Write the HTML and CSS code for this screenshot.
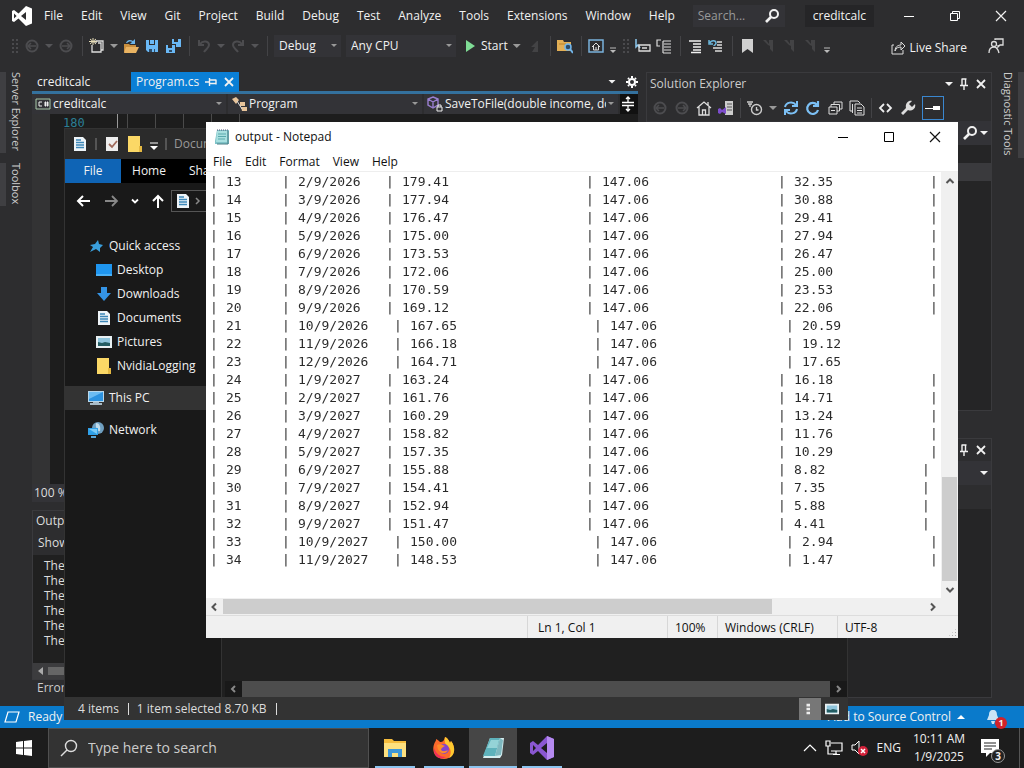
FILE: index.html
```html
<!DOCTYPE html>
<html lang="en">
<head>
  <meta charset="UTF-8">
  <meta name="viewport" content="width=device-width, initial-scale=1.0">
  <title>Desktop</title>
  <link rel="stylesheet" href="styles.css">
</head>
<body>
  <!-- shared icons -->
  <svg class="sprite" aria-hidden="true">
    <symbol id="i-close" viewBox="0 0 12 12"><path d="M1 1l10 10M11 1L1 11" stroke="currentColor" stroke-width="1.2"/></symbol>
    <symbol id="i-x" viewBox="0 0 12 12"><path d="M2 2l8 8M10 2l-8 8" stroke="currentColor" stroke-width="1.8"/></symbol>
    <symbol id="i-pin" viewBox="0 0 12 12"><path d="M3.5 1h5M4 1v6M7.500 1v6M2 7.500h8M6 8v4" stroke="currentColor" stroke-width="1.400" fill="none"/></symbol>
    <symbol id="i-loupe" viewBox="0 0 16 16"><circle cx="10" cy="6" r="4" stroke="currentColor" stroke-width="2" fill="none"/><path d="M7 9l-5 5" stroke="currentColor" stroke-width="2.6"/></symbol>
    <symbol id="i-doc" viewBox="0 0 16 16"><path d="M2 1h9l3 3v11H2z" fill="#eef4f8"/><path d="M4 4h5M4 6.500h8M4 9h8M4 11.500h8" stroke="#3d87b8" stroke-width="1.300"/></symbol>
    <symbol id="i-pic" viewBox="0 0 16 16"><path d="M0 2h16v12H0z" fill="#e8f0f2"/><path d="M2 4h12v8H2z" fill="#8fc5dc"/><path d="M2 8l4 1 3-1 5 1v3H2z" fill="#235d63"/></symbol>
    <symbol id="i-folder" viewBox="0 0 16 16"><path d="M1 0h12v10h2v6H1z" fill="#fbd866"/><path d="M12 10h3v6h-3z" fill="#e5b942"/></symbol>
    <symbol id="i-note" viewBox="0 0 16 16"><path d="M3 1h12v14H1L1 12z" fill="#7fc3c8"/><path d="M3 2h10v11H2z" fill="#a9e0e0"/><path d="M4 5h8M4 7.500h8M4 10h7" stroke="#5aa9ad"/><path d="M3 1h11" stroke="#557" stroke-dasharray="1 1"/><path d="M14 2v13H3" stroke="#4a7d85" fill="none"/></symbol>
    <symbol id="i-back" viewBox="0 0 16 16"><circle cx="8" cy="8" r="5.500" stroke="currentColor" stroke-width="2" fill="none"/><path d="M4 8h8M7 5L4 8l3 3" stroke="currentColor" stroke-width="1.500" fill="none"/></symbol>
    <symbol id="i-lines" viewBox="0 0 16 16"><path d="M2 3h12M6 6h8M6 9h8M6 12h8M4 14.500h10" stroke="currentColor" stroke-width="1.300"/></symbol>
    <symbol id="i-mark" viewBox="0 0 16 16"><path d="M3 2h3l3 4V2h4v12l-3-3V8L8 7z" fill="currentColor"/></symbol>
    <symbol id="i-over" viewBox="0 0 8 16"><path d="M1 10h6" stroke="currentColor"/><path d="M1 12h6l-3 3z" fill="currentColor"/></symbol>
  </svg>

  <div class="desktop">
    <main class="vs">
      <header class="vs-menu">
        <svg class="vs-logo" viewBox="0 0 20 20"><path d="M14 0l6 2.500v15L14 20 6.500 12.600 2 16l-2-1V5l2-1 4.500 3.400zM14 6l-5 4 5 4zM2 7.500v5L4.600 10z" fill="#fff" fill-rule="evenodd"/></svg>
        <nav>
          <button>File</button><button>Edit</button><button>View</button><button>Git</button><button>Project</button><button>Build</button><button>Debug</button><button>Test</button><button>Analyze</button><button>Tools</button><button>Extensions</button><button>Window</button><button>Help</button>
        </nav>
        <div class="vs-search"><input type="text" placeholder="Search..." aria-label="Search"><svg class="ic"><use href="#i-loupe"/></svg></div>
        <span class="vs-name">creditcalc</span>
        <div class="vs-controls">
          <button aria-label="Minimize"><svg viewBox="0 0 12 12"><path d="M1 6.500h10" stroke="#fff"/></svg></button>
          <button aria-label="Restore"><svg viewBox="0 0 12 12"><path d="M1.500 3.500h7v7h-7zM3.500 3.500v-2h7v7h-2" stroke="#fff" fill="none"/></svg></button>
          <button aria-label="Close"><svg><use href="#i-close"/></svg></button>
        </div>
      </header>

      <div class="vs-toolbar">
        <span class="grip"></span>
        <button class="ic dim" aria-label="Back"><svg><use href="#i-back"/></svg></button>
        <span class="caret dim"></span>
        <button class="ic dim flip" aria-label="Forward"><svg><use href="#i-back"/></svg></button>
        <span class="sep"></span>
        <button class="ic" aria-label="New project"><svg viewBox="0 0 16 16"><path d="M3 7v7h9V5H9M7 5V3h7v9h-2" stroke="#ddd" stroke-width="1.300" fill="none"/><path d="M4 0v7M1 1l6 5M7 1L1 6M0 3.500h8" stroke="#e6dcb8"/></svg></button>
        <span class="caret"></span>
        <button class="ic" aria-label="Open"><svg viewBox="0 0 16 16"><path d="M1 6h5l1 1h6v7H1z" fill="#c98f3f"/><path d="M3 9h13l-3 6H1z" fill="#e9b362"/><path d="M3 5c1-3 4-4 7-2l2-2v5H7l2-2C7 3 5 4 4 5z" fill="#6cb4ea"/></svg></button>
        <button class="ic" aria-label="Save"><svg viewBox="0 0 16 16"><path d="M2 2h3v5h6V2h3v12H4l-2-2z" fill="#6ab8f5"/><path d="M6 2h4v4H6z" fill="#6ab8f5"/><path d="M5 11h6v3H5z" fill="#2d4b66"/><path d="M8 11h2v3H8z" fill="#6ab8f5"/></svg></button>
        <button class="ic" aria-label="Save all"><svg viewBox="0 0 16 16"><path d="M7 1h2v3h4V1h3v8h-5V6H7z" fill="#6ab8f5"/><path d="M1 7h2v3h4V7h3v8H1z" fill="#6ab8f5"/><path d="M4 12h3v2H4z" fill="#2d4b66"/></svg></button>
        <span class="sep"></span>
        <button class="ic dim" aria-label="Undo"><svg viewBox="0 0 16 16"><path d="M3 2v5h5M4 6c3-4 9-3 9 1 0 3-3 4-5 7" stroke="currentColor" stroke-width="2" fill="none"/></svg></button>
        <span class="caret dim"></span>
        <button class="ic dim flip" aria-label="Redo"><svg viewBox="0 0 16 16"><path d="M3 2v5h5M4 6c3-4 9-3 9 1 0 3-3 4-5 7" stroke="currentColor" stroke-width="2" fill="none"/></svg></button>
        <span class="caret dim"></span>
        <span class="sep"></span>
        <select class="config" aria-label="Solution configuration"><option>Debug</option></select>
        <select class="config platform" aria-label="Solution platform"><option>Any CPU</option></select>
        <button class="start"><svg class="ic" viewBox="0 0 16 16"><path d="M5 2l9 6-9 6z" fill="#7fdc95"/></svg>Start</button>
        <span class="caret"></span>
        <button class="ic faint" aria-label="Hot reload"><svg viewBox="0 0 16 16"><path d="M11 3l-6 6h4l-3 5h6V3z" fill="currentColor"/></svg></button>
        <span class="sep"></span>
        <button class="ic" aria-label="Find in files"><svg viewBox="0 0 16 16"><path d="M0 2h6l1 2h7v9H0z" fill="#e2af55"/><path d="M2 6h7" stroke="#b9822d"/><circle cx="11" cy="9" r="3" fill="#2d4b66" stroke="#72b6ea" stroke-width="1.500"/><path d="M13 11l3 4" stroke="#72b6ea" stroke-width="2"/></svg></button>
        <span class="sep"></span>
        <button class="ic" aria-label="Start window"><svg viewBox="0 0 16 16"><path d="M1 2h14v12H1z" stroke="#7ab2dd" stroke-width="1.500" fill="none"/><path d="M4 9l4-4 4 4M5.500 8v4h5V8M8 12V9" stroke="#ddd" fill="none"/></svg></button>
        <svg class="over"><use href="#i-over"/></svg>
        <span class="grip"></span>
        <button class="ic" aria-label="Select element"><svg viewBox="0 0 16 16"><path d="M1 1v8l2-2 2 3" stroke="#8cc8ee" stroke-width="1.500" fill="none"/><path d="M4 7h11v6H4zM7 10h5" stroke="#ddd" fill="none" stroke-width="1.300"/></svg></button>
        <button class="ic" aria-label="Display layout"><svg viewBox="0 0 16 16"><path d="M5 2H1v6h3M7 3h8M8 6h7M8 9h7M8 12h7M7 3v12M7 15h8" stroke="#ddd" fill="none" stroke-width="1.200"/></svg></button>
        <span class="sep"></span>
        <button class="ic" aria-label="Indent"><svg><use href="#i-lines"/></svg></button>
        <button class="ic" aria-label="Uncomment"><svg viewBox="0 0 16 16"><path d="M1 2v4h4M2 5c1-3 6-3 6 0 0 2-2 2-2 3" stroke="#6bb5da" stroke-width="1.500" fill="none"/><path d="M9 4h5M9 7h5M5 10h9M7 13h7" stroke="#ddd" stroke-width="1.300"/></svg></button>
        <span class="sep"></span>
        <button class="ic" aria-label="Bookmark"><svg viewBox="0 0 16 16"><path d="M3 1h11v14l-5.500-4L3 15z" fill="#d0d0d0"/></svg></button>
        <button class="ic faint" aria-label="Previous bookmark"><svg><use href="#i-mark"/></svg></button>
        <button class="ic faint" aria-label="Next bookmark"><svg><use href="#i-mark"/></svg></button>
        <button class="ic faint" aria-label="Clear bookmarks"><svg><use href="#i-mark"/></svg></button>
        <svg class="over"><use href="#i-over"/></svg>
        <button class="share"><svg class="ic" viewBox="0 0 16 16"><path d="M4 5H2v9h11v-4M5 11c0-5 4-6 6-6V2l4 4-4 4V7C8 7 6 8 5 11z" stroke="#ddd" fill="none"/></svg>Live Share</button>
        <button class="ic feedback" aria-label="Feedback"><svg viewBox="0 0 16 16"><circle cx="6" cy="6" r="2.500" stroke="#ddd" fill="none" stroke-width="1.300"/><path d="M1 15c0-4 2-6 5-6s4 2 5 6M7 2V1h8v6h-3l-2 2V7" stroke="#ddd" fill="none" stroke-width="1.300"/></svg></button>
      </div>

      <div class="vs-body">
        <aside class="rail"><button>Server Explorer</button><button>Toolbox</button></aside>

        <section class="docs">
          <div class="doc-tabs">
            <button class="doc-tab">creditcalc</button>
            <button class="doc-tab active">Program.cs <svg class="pin-side"><use href="#i-pin"/></svg><svg><use href="#i-x"/></svg></button>
            <span class="caret light"></span>
            <button class="gear" aria-label="Settings"><svg viewBox="0 0 12 12"><circle cx="6" cy="6" r="3" stroke="#fff" stroke-width="2" fill="none"/><path d="M6 0v2M6 10v2M0 6h2M10 6h2M2 2l1 1M9 9l1 1M10 2L9 3M3 9l-1 1" stroke="#fff" stroke-width="2"/></svg></button>
          </div>
          <div class="doc-nav">
            <div><svg viewBox="0 0 16 16"><path d="M1 3h14v10H1z" stroke="#a9c9a9" fill="none"/><path d="M7 6H4v4h3M9 7h5M9 9h5M10.500 5.500v5M12.500 5.500v5" stroke="#eee" fill="none"/></svg><select aria-label="Project"><option>creditcalc</option></select></div>
            <div><svg viewBox="0 0 16 16"><path d="M1 3l4-2 3 3-3 4zM9 6h5v4H9zM10 11h6v4h-5z" fill="#e8c49a"/><path d="M6 5l5 8" stroke="#ddd"/></svg><select aria-label="Type"><option>Program</option></select></div>
            <div><svg viewBox="0 0 16 16"><path d="M6 1l5 2v6l-5 3-5-3V3zM1 3l5 3 5-3M6 6v5" stroke="#9a7fd0" fill="none" stroke-width="1.400"/><path d="M10 11h5v4h-5zM11 11V9h3v2" stroke="#eee" fill="none"/></svg><select aria-label="Member"><option>SaveToFile(double income, do</option></select></div>
            <button class="split" aria-label="Split"><svg viewBox="0 0 16 16"><path d="M2 6.500h12M2 9.500h12M8 1v5M8 10v5M6 3l2-2 2 2M6 13l2 2 2-2" stroke="#fff" stroke-width="1.300" fill="none"/></svg></button>
          </div>
          <div class="code"><span class="line-no">180</span><span class="guides"></span></div>
          <div class="zoom-level">100 %</div>
          <div class="output">
            <h2>Output</h2>
            <p>Show output from:</p>
            <pre>The thread
The thread
The thread
The thread
The thread
The program</pre>
            <div class="output-scroll"><i></i><b></b></div>
          </div>
          <button class="error-tab">Error List</button>
        </section>

        <section class="side">
          <div class="panel solution">
            <div class="panel-head"><h2>Solution Explorer</h2><span class="caret light"></span><svg><use href="#i-pin"/></svg><svg><use href="#i-x"/></svg></div>
            <div class="sol-tools">
              <button class="ic dim" aria-label="Back"><svg><use href="#i-back"/></svg></button>
              <button class="ic dim flip" aria-label="Forward"><svg><use href="#i-back"/></svg></button>
              <button class="ic" aria-label="Home"><svg viewBox="0 0 16 16"><path d="M1 8l7-6 7 6M3 7v8h10V7M6.500 15v-5h3v5M12 5V2" stroke="#ddd" stroke-width="1.300" fill="none"/></svg></button>
              <button class="ic" aria-label="Switch views"><svg viewBox="0 0 16 16"><path d="M7 1h8v14H7z" fill="#ccc"/><path d="M9 4h5M9 7h5M9 10h5" stroke="#555"/><path d="M0 9l2-1 2 2 4-3v7l-4-2-2 2-2-1z" fill="#7c4dcc"/></svg></button>
              <span class="sep"></span>
              <button class="ic" aria-label="Pending changes"><svg viewBox="0 0 16 16"><circle cx="9.500" cy="9.500" r="5" stroke="#ccc" stroke-width="1.400" fill="none"/><path d="M9.500 7v3h2M0 2h6M1 4h4M3 4v3" stroke="#ccc" stroke-width="1.300" fill="none"/></svg></button>
              <span class="caret"></span>
              <button class="ic" aria-label="Sync"><svg viewBox="0 0 16 16"><path d="M2 7c1-5 8-6 11-2M14 1v5H9M14 9c-1 5-8 6-11 2M2 15v-5h5" stroke="#7cc0f5" stroke-width="2" fill="none"/></svg></button>
              <button class="ic" aria-label="Refresh"><svg viewBox="0 0 16 16"><path d="M12 5a5.500 5.500 0 1 0 1 5M13 1v5H8" stroke="#7cc0f5" stroke-width="2.200" fill="none"/></svg></button>
              <button class="ic" aria-label="Collapse all"><svg viewBox="0 0 16 16"><path d="M2 7h8v7H2zM4 10.500h4M4 7V4.500h8.500V11H10M7 4V2h8v7h-2" stroke="#ddd" fill="none"/></svg></button>
              <button class="ic" aria-label="Show all files"><svg viewBox="0 0 16 16"><path d="M4 11H1V1h8l2 2M6 4h6l3 3v8H6zM8 8h5M8 10.500h5M8 13h5M3.500 13V4" stroke="#ddd" fill="none"/></svg></button>
              <span class="sep"></span>
              <button class="ic" aria-label="View code"><svg viewBox="0 0 16 16"><path d="M6 4L2 8l4 4M9 4l4 4-4 4" stroke="#eee" stroke-width="1.800" fill="none"/></svg></button>
              <button class="ic" aria-label="Properties"><svg viewBox="0 0 16 16"><path d="M15 4a5 5 0 0 1-7 6l-5 5-2-2 5-5c-1-4 2-8 6-7L9 4l3 3z" fill="#ddd"/></svg></button>
              <button class="ic on" aria-label="Preview"><svg viewBox="0 0 16 16"><path d="M0 8.500h8" stroke="#fff"/><path d="M8 6h7v4H8z" fill="#fff"/></svg></button>
            </div>
            <div class="sol-search"><svg class="ic"><use href="#i-loupe"/></svg><span class="caret light"></span></div>
            <div class="sol-tree"><div class="sol-selected"></div></div>
          </div>
          <div class="panel props">
            <div class="panel-head"><h2></h2><svg><use href="#i-pin"/></svg><svg><use href="#i-x"/></svg></div>
            <div class="props-row"><span class="caret light"></span></div>
            <div class="props-box"></div>
          </div>
        </section>

        <aside class="rail right"><button>Diagnostic Tools</button></aside>
      </div>

      <footer class="vs-status">
        <svg viewBox="0 0 16 16"><path d="M4 3h11l-3 10H1z" stroke="#fff" fill="none" stroke-width="1.200"/></svg>
        <span>Ready</span>
        <button class="source">Add to Source Control<i></i></button>
        <span class="bell"><svg viewBox="0 0 16 16"><path d="M8 1c3 0 4 2 4 5l2 5H2l2-5c0-3 1-5 4-5zM6 12h4l-1 3H7z" fill="#c9e3f6"/></svg><b>1</b></span>
      </footer>
    </main>

    <section class="window explorer">
      <header class="ex-title">
        <svg class="ic"><use href="#i-doc"/></svg><span class="bar"></span>
        <svg class="ic" viewBox="0 0 16 16"><path d="M2 1h12v14H2z" fill="#eee"/><path d="M5 8l3 3 5-6" stroke="#a06a5b" stroke-width="1.800" fill="none"/></svg>
        <svg class="ic"><use href="#i-folder"/></svg>
        <svg class="ic narrow" viewBox="0 0 8 16"><path d="M0 7h8" stroke="#fff"/><path d="M0 10h8l-4 4z" fill="#fff"/></svg><span class="bar"></span>
        <span>Documents</span>
      </header>
      <nav class="ex-tabs"><button class="file">File</button><button>Home</button><button>Share</button></nav>
      <div class="ex-nav">
        <button class="ic" aria-label="Back"><svg viewBox="0 0 16 16"><path d="M15 8H3M8 3L3 8l5 5" stroke="#fff" stroke-width="2" fill="none"/></svg></button>
        <button class="ic" aria-label="Forward"><svg viewBox="0 0 16 16"><path d="M1 8h12M8 3l5 5-5 5" stroke="#888" stroke-width="1.800" fill="none"/></svg></button>
        <button class="ic narrow" aria-label="Recent"><svg viewBox="0 0 8 16"><path d="M1 6.500l3 3 3-3" stroke="#fff" stroke-width="1.800" fill="none"/></svg></button>
        <button class="ic" aria-label="Up"><svg viewBox="0 0 16 16"><path d="M8 15V3M3 8l5-5 5 5" stroke="#fff" stroke-width="2" fill="none"/></svg></button>
        <div class="address"><svg class="ic"><use href="#i-doc"/></svg><svg class="ic narrow" viewBox="0 0 8 16"><path d="M2 5l3 3-3 3" stroke="#888" stroke-width="1.500" fill="none"/></svg></div>
      </div>
      <div class="ex-body">
        <ul class="ex-tree">
          <li><svg viewBox="0 0 16 16"><path d="M10 2l1 4 4 1-3 3 0 4-4-3-6 3 3-5-3-2 5-1z" fill="#3a9fdc"/></svg>Quick access</li>
          <li class="sub"><svg viewBox="0 0 16 16"><path d="M0 2h16v12H0z" fill="#1f96f0"/><path d="M0 12h16v2H0z" fill="#4ab1f7"/></svg>Desktop</li>
          <li class="sub"><svg viewBox="0 0 16 16"><path d="M5 1h6v6h4l-7 8-7-8h4z" fill="#3494e6"/></svg>Downloads</li>
          <li class="sub"><svg><use href="#i-doc"/></svg>Documents</li>
          <li class="sub"><svg><use href="#i-pic"/></svg>Pictures</li>
          <li class="sub"><svg><use href="#i-folder"/></svg>NvidiaLogging</li>
          <li class="group selected"><svg viewBox="0 0 16 16"><path d="M0 1h16v11H0z" fill="#b9d7ea"/><path d="M1 2h14v9H1z" fill="#2d93e0"/><path d="M1 2h14L1 9z" fill="#6cbcf2"/><path d="M5 12h6v1h3v2H2v-2h3z" fill="#a9bcc8"/></svg>This PC</li>
          <li class="group"><svg viewBox="0 0 16 16"><circle cx="10" cy="6" r="6" fill="#6f9fc0"/><path d="M8 1c3 0 5 3 4 8-2 1-5-3-4-8z" fill="#c1dceb"/><path d="M0 6h10v7H0z" fill="#2fa0e8"/><path d="M1 7h8v5z" fill="#7acbf7"/><path d="M3 14h5v2H3z" fill="#58a7d8"/></svg>Network</li>
        </ul>
        <div class="ex-files">
          <div class="ex-scroll"><svg viewBox="0 0 8 16"><path d="M6 5L3 8l3 3" stroke="#888" stroke-width="2" fill="none"/></svg><span></span><svg viewBox="0 0 8 16"><path d="M2 5l3 3-3 3" stroke="#888" stroke-width="2" fill="none"/></svg></div>
        </div>
      </div>
      <footer class="ex-status">
        <span>4 items</span><span>1 item selected 8.70 KB</span>
        <button class="on" aria-label="Details view"><svg viewBox="0 0 16 16"><path d="M4 2h4v3H4zM4 6.500h4v3H4zM4 11h4v3H4z" fill="#eee"/></svg></button>
        <button aria-label="Large icons"><svg><use href="#i-pic"/></svg></button>
      </footer>
    </section>

    <section class="window notepad">
      <header class="np-title">
        <svg class="ic"><use href="#i-note"/></svg><h1>output - Notepad</h1>
        <button aria-label="Minimize"><svg viewBox="0 0 12 12"><path d="M1 6.500h10" stroke="#000"/></svg></button>
        <button aria-label="Maximize"><svg viewBox="0 0 12 12"><path d="M1.500 1.500h9v9h-9z" stroke="#000" fill="none"/></svg></button>
        <button aria-label="Close"><svg><use href="#i-close"/></svg></button>
      </header>
      <nav class="np-menu"><button>File</button><button>Edit</button><button>Format</button><button>View</button><button>Help</button></nav>
      <div class="np-edit">
        <textarea id="note" aria-label="Text editor" wrap="off" spellcheck="false"></textarea>
        <div class="np-vscroll"><svg viewBox="0 0 10 10"><path d="M1.500 7L5 3.500 8.500 7" stroke="#555" stroke-width="2" fill="none"/></svg><span></span><svg viewBox="0 0 10 10"><path d="M1.500 3L5 6.500 8.500 3" stroke="#555" stroke-width="2" fill="none"/></svg></div>
      </div>
      <div class="np-hscroll"><svg viewBox="0 0 10 10"><path d="M7 1.500L3.500 5 7 8.500" stroke="#555" stroke-width="2" fill="none"/></svg><span></span><svg viewBox="0 0 10 10"><path d="M3 1.500L6.500 5 3 8.500" stroke="#555" stroke-width="2" fill="none"/></svg></div>
      <footer class="np-status"><span></span><span>Ln 1, Col 1</span><span>100%</span><span>Windows (CRLF)</span><span>UTF-8<i></i></span></footer>
    </section>
  </div>

  <div class="taskbar">
    <button class="start-menu" aria-label="Start"><svg viewBox="0 0 16 16"><path d="M0 2l7-1v6.500H0zM8 1l8-1v7.500H8zM0 8.500h7V15l-7-1zM8 8.500h8V16l-8-1z" fill="#fff"/></svg></button>
    <div class="task-search"><svg viewBox="0 0 18 18"><circle cx="11" cy="7" r="5.500" stroke="#ddd" stroke-width="1.400" fill="none"/><path d="M7 11l-6 6" stroke="#ddd" stroke-width="1.400"/></svg><input type="text" placeholder="Type here to search" aria-label="Type here to search"></div>
    <div class="apps">
      <button aria-label="File Explorer"><svg viewBox="0 0 24 24"><path d="M1 3h8l2 2h12v16H1z" fill="#f5bc3d"/><path d="M1 7h22v14H1z" fill="#fde07f"/><path d="M5 13h14v8h-4v-4H9v4H5z" fill="#3e97d8"/></svg></button>
      <button aria-label="Firefox"><svg viewBox="0 0 24 24"><path d="M3 6c1-1 1-2 1-3 2 1 3 2 4 3 3 0 4-1 5-5 3 1 4 4 5 6l1-2c5 6 5 17-7 18C2 23-1 14 3 6z" fill="#fb6a2b"/><path d="M13 1c3 1 4 4 5 6l1-2c5 6 4 15-2 17 3-5 2-10-2-12-2-2-3-5-2-9z" fill="#fdc92f"/><circle cx="12" cy="13" r="5" fill="#8444cc"/><path d="M5 9c3-2 6 0 8 1-2 1-4 2-4 4 2 2 5 1 7 0-2 5-10 5-11-5z" fill="#fc8c2a"/><path d="M2 12c2 6 6 9 12 9-6 4-13-1-12-9z" fill="#f02e5c"/></svg></button>
      <button class="current" aria-label="Notepad"><svg viewBox="0 0 24 24"><path d="M9 2h14l-2 17-2 3H2z" fill="#d6eef0"/><path d="M9 2h10l-5 18H2z" fill="#5eb2bb"/><path d="M10 4h8l-2 8H6z" fill="#94d3d7"/><path d="M19 2l-5 18 6-1 2-15z" fill="#7fb8bf"/></svg></button>
      <button aria-label="Visual Studio"><svg viewBox="0 0 24 24"><path d="M17 0l7 3v18l-7 3L8 15l-5 4-3-2V7l3-2 5 4zM17 7l-6 5 6 5zM3 9v6l3-3z" fill="#8a57d1" fill-rule="evenodd"/><path d="M17 0l7 3v18l-7 3z" fill="#b58af0"/></svg></button>
    </div>
    <div class="tray">
      <svg class="up" viewBox="0 0 14 14"><path d="M1 10l6-6 6 6" stroke="#fff" stroke-width="1.200" fill="none"/></svg>
      <svg viewBox="0 0 18 16"><path d="M6 3h11v8H6M1 1h4v5H1zM3 6v8h9M11 11v3M8 14.500h7" stroke="#fff" fill="none" stroke-width="1.200"/></svg>
      <svg viewBox="0 0 18 16"><path d="M1 5h3l4-4v13l-4-4H1z" stroke="#fff" fill="none"/><circle cx="12" cy="11" r="5" fill="#d3223a"/><path d="M10 9l4 4M14 9l-4 4" stroke="#fff" stroke-width="1.500"/></svg>
      <span>ENG</span>
      <time>10:11 AM<br>1/9/2025</time>
      <button class="notes" aria-label="Notifications"><svg viewBox="0 0 18 18"><path d="M0 0h18v14H9l-4 4v-4H0z" fill="#fff"/><path d="M3 4h12M3 7h12M3 10h8" stroke="#222"/></svg><b>3</b></button>
      <span class="show-desktop"></span>
    </div>
  </div>

  <script>
    // loan schedule, cells padded with tabs so the columns stay on the tab grid
    const interest = ['32.35', '30.88', '29.41', '27.94', '26.47', '25.00', '23.53', '22.06', '20.59', '19.12', '17.65',
      '16.18', '14.71', '13.24', '11.76', '10.29', '8.82', '7.35', '5.88', '4.41', '2.94', '1.47'];
    const payment = ['179.41', '177.94', '176.47', '175.00', '173.53', '172.06', '170.59', '169.12', '167.65', '166.18', '164.71',
      '163.24', '161.76', '160.29', '158.82', '157.35', '155.88', '154.41', '152.94', '151.47', '150.00', '148.53'];
    const tabs = (n) => '\t'.repeat(n);

    document.getElementById('note').value = interest.map((rate, i) => {
      const month = (i + 1) % 12 + 1;
      const year = i < 11 ? 2026 : 2027;
      return [
        '|\t' + (i + 13) + tabs(5),
        '\t' + month + '/9/' + year + tabs(3),
        '\t' + payment[i] + tabs(17),
        '\t147.06' + tabs(16),
        '\t' + rate + tabs(12),
        ''
      ].join('|');
    }).join('\n');
  </script>
</body>
</html>
```
FILE: styles.css
```css
* {
  margin: 0;
  padding: 0;
  box-sizing: border-box;
}

body {
  font-family: "Open Sans", "Noto Sans", sans-serif;
  font-size: 12px;
  line-height: 16px;
  color: #f1f1f1;
  background: #1f1f1f;
  height: 100vh;
  display: flex;
  flex-direction: column;
  overflow: hidden;
}

button,
input,
select,
textarea {
  font: inherit;
  color: inherit;
  background: none;
  border: none;
  outline: none;
  white-space: nowrap;
}

h1,
h2 {
  font-size: 12px;
  font-weight: normal;
}

svg {
  display: block;
  flex: none;
}

.sprite {
  position: absolute;
  width: 0;
  height: 0;
}

.desktop {
  flex: 1;
  min-height: 0;
  position: relative;
}

/* small shared pieces */
.ic,
.ic svg {
  width: 16px;
  height: 16px;
  flex: none;
}

.ic.narrow,
.ic.narrow svg {
  width: 8px;
}

.dim { color: #4c4c4f; }
.faint { color: #434345; }
.flip svg { transform: scaleX(-1); }

.caret {
  flex: none;
  width: 8px;
  height: 4px;
  background: #999;
  clip-path: polygon(0 0, 100% 0, 50% 100%);
}

.caret.dim { background: #555558; }
.caret.light { background: #f1f1f1; }

.sep {
  width: 1px;
  height: 20px;
  margin: 0 1px 0 3px;
  background: #434346;
}

.grip {
  width: 8px;
  height: 16px;
  background: radial-gradient(#4a4a4d 1px, transparent 1px) 0 0 / 4px 4px;
}

.over {
  width: 8px;
  height: 16px;
  color: #bbb;
}

select {
  appearance: none;
  background: url("data:image/svg+xml,%3Csvg xmlns='http://www.w3.org/2000/svg' width='8' height='4'%3E%3Cpath d='M1 0h6L4 3z' fill='%23999'/%3E%3C/svg%3E") no-repeat right 3px center;
}

/* Visual Studio */
.vs {
  height: 100%;
  display: flex;
  flex-direction: column;
  background: #2d2d2f;
}

.vs-menu {
  height: 32px;
  flex: none;
  display: flex;
  align-items: center;
  padding-left: 12px;
}

.vs-logo {
  width: 20px;
  height: 20px;
}

.vs-menu nav {
  display: flex;
  gap: 18px;
  margin-left: 12px;
}

.vs-search {
  display: flex;
  align-items: center;
  width: 92px;
  height: 22px;
  margin-left: auto;
  padding: 0 5px;
  background: #333337;
}

.vs-search input {
  flex: 1;
  min-width: 0;
}

.vs-search input::placeholder { color: #999; }

.vs-name {
  margin: 0 12px 0 20px;
  padding: 3px 8px;
  background: #252527;
}

.vs-controls { display: flex; }

.vs-controls button {
  width: 46px;
  height: 32px;
  display: flex;
  align-items: center;
  justify-content: center;
}

.vs-controls svg {
  width: 12px;
  height: 12px;
}

.vs-toolbar {
  height: 40px;
  flex: none;
  display: flex;
  align-items: center;
  gap: 5px;
  padding: 0 20px 12px 11px;
}

.config {
  width: 67px;
  height: 22px;
  padding-left: 5px;
  background-color: #333337;
}

.config.platform { width: 110px; }

.start,
.share {
  display: flex;
  align-items: center;
  gap: 4px;
}

.share {
  margin-left: auto;
  padding-top: 3px;
}

.feedback { margin-left: 16px; }

.vs-body {
  flex: 1;
  min-height: 0;
  display: grid;
  grid-template-columns: 32px minmax(0, 606px) minmax(346px, 1fr) 32px;
}

.rail {
  display: flex;
  flex-direction: column;
  align-items: flex-start;
  gap: 10px;
  font-size: 11px;
  color: #ccc;
}

.rail button {
  writing-mode: vertical-rl;
  padding: 0 2px 2px;
  border-left: 6px solid #3f3f42;
}

.rail.right { align-items: flex-end; }

.rail.right button {
  border-left: none;
  border-right: 6px solid #3f3f42;
}

.docs {
  display: flex;
  flex-direction: column;
  min-height: 0;
}

.doc-tabs {
  height: 22px;
  flex: none;
  display: flex;
  align-items: center;
  gap: 10px;
  border-bottom: 3px solid #34719e;
}

.doc-tab {
  display: flex;
  align-items: center;
  gap: 6px;
  height: 19px;
  padding: 0 4px 0 5px;
}

.doc-tab:first-child { width: 89px; }

.doc-tab.active {
  height: 20px;
  background: #0a7fd6;
}

.doc-tab svg,
.panel-head svg,
.gear svg {
  width: 12px;
  height: 12px;
}

.pin-side { transform: rotate(90deg); }
.doc-tabs .caret { margin-left: auto; }

.doc-nav {
  height: 20px;
  flex: none;
  display: flex;
  background: #333337;
}

.doc-nav div {
  flex: 1;
  min-width: 0;
  display: flex;
  align-items: center;
  padding-left: 3px;
  border-right: 2px solid #2d2d2f;
}

.doc-nav select {
  flex: 1;
  min-width: 0;
  padding: 0 12px 0 2px;
}

.doc-nav svg {
  width: 16px;
  height: 16px;
}

.split {
  width: 18px;
  background: #111;
}

.code {
  flex: 1;
  min-height: 0;
  overflow: hidden;
  display: flex;
  background: #1d1d1d;
  border-left: 18px solid #333334;
}

.line-no {
  padding: 1px 0 0 13px;
  font-family: "DejaVu Sans Mono", monospace;
  color: #2b7f95;
}

.guides {
  width: 140px;
  margin-left: 32px;
  border-left: 1px solid #999;
  background: repeating-linear-gradient(90deg, transparent 0 9px, #4a4a4a 9px 10px, transparent 10px 28px);
}

.zoom-level {
  height: 18px;
  flex: none;
  padding: 1px 2px;
  background: #333337;
  color: #ddd;
}

.output {
  margin-top: 8px;
  border: 1px solid #3a3a3d;
  color: #ddd;
}

.output h2 { padding: 2px 3px; }
.output p { padding: 4px 5px; }

.output pre {
  padding: 3px 11px 15px;
  font-family: inherit;
  line-height: 15px;
  background: #202020;
}

.output-scroll {
  display: flex;
  align-items: center;
  gap: 5px;
  height: 16px;
  padding-left: 5px;
  background: #3c3c3e;
}

.output-scroll i {
  width: 5px;
  height: 8px;
  background: #aaa;
  clip-path: polygon(100% 0, 100% 100%, 0 50%);
}

.output-scroll b {
  width: 100px;
  height: 8px;
  background: #666;
}

.error-tab {
  height: 26px;
  flex: none;
  padding: 0 5px 10px;
  text-align: left;
  color: #ccc;
}

.side {
  display: grid;
  grid-template-rows: 339fr 260fr;
  gap: 27px;
  padding: 0 0 8px 8px;
}

.panel {
  background: #252526;
  border: 1px solid #3a3a3d;
}

.panel-head {
  display: flex;
  align-items: center;
  gap: 5px;
  height: 22px;
  padding: 0 4px 0 3px;
  background: #2d2d2f;
}

.panel-head h2 {
  flex: 1;
  color: #ccc;
}

.sol-tools {
  display: flex;
  align-items: center;
  gap: 6px;
  height: 26px;
  padding: 0 6px 0 5px;
  background: #2d2d2f;
}

.sol-tools .sep { margin: 0; }

.sol-tools .on {
  width: 22px;
  height: 24px;
  display: flex;
  align-items: center;
  justify-content: center;
  border: 1px solid #3a87d0;
}

.sol-search {
  display: flex;
  align-items: center;
  justify-content: flex-end;
  gap: 2px;
  height: 24px;
  padding-right: 3px;
  background: #333337;
}

.sol-selected {
  height: 18px;
  margin-top: 18px;
  background: #3a3a3d;
}

.props-row {
  display: flex;
  align-items: center;
  justify-content: flex-end;
  height: 24px;
  padding-right: 3px;
  background: #333337;
}

.props-box {
  height: 24px;
  background: #2d2d2f;
}

.vs-status {
  height: 22px;
  flex: none;
  display: flex;
  align-items: center;
  gap: 8px;
  padding: 0 17px 0 4px;
  background: #0a7acb;
}

.vs-status svg {
  width: 16px;
  height: 16px;
}

.source {
  display: flex;
  align-items: center;
  gap: 6px;
  margin-left: auto;
}

.source i {
  width: 8px;
  height: 4px;
  background: #fff;
  clip-path: polygon(0 100%, 100% 100%, 50% 0);
}

.bell {
  position: relative;
  margin-left: 12px;
  padding-right: 6px;
}

.bell b {
  position: absolute;
  right: 0;
  bottom: -4px;
  width: 12px;
  height: 12px;
  border-radius: 6px;
  background: #d3222a;
  font-size: 9px;
  line-height: 12px;
  text-align: center;
}

/* windows on the desktop */
.window {
  position: absolute;
  display: flex;
  flex-direction: column;
}

.explorer {
  left: 64px;
  top: 128px;
  width: 784px;
  height: 592px;
  background: #191919;
  border: 1px solid #333;
  border-bottom: none;
}

.ex-title {
  display: flex;
  align-items: center;
  gap: 7px;
  height: 30px;
  padding-left: 7px;
  background: #2b2b2b;
  color: #999;
}

.bar {
  width: 2px;
  height: 12px;
  background: #555;
}

.ex-tabs {
  display: flex;
  height: 24px;
  background: #000;
}

.ex-tabs button { width: 56px; }
.ex-tabs .file { background: #0f64b5; }

.ex-nav {
  display: flex;
  align-items: center;
  gap: 13px;
  height: 35px;
  padding: 0 10px;
}

.ex-nav .narrow { margin: 0 -2px; }

.address {
  flex: 1;
  display: flex;
  align-items: center;
  gap: 5px;
  height: 22px;
  margin-left: -8px;
  padding: 0 3px;
  border: 1px solid #555;
}

.ex-body {
  flex: 1;
  min-height: 0;
  display: flex;
}

.ex-tree {
  width: 157px;
  padding-top: 16px;
  border-right: 1px solid #333;
  list-style: none;
}

.ex-tree li {
  display: flex;
  align-items: center;
  gap: 5px;
  height: 24px;
  padding-left: 23px;
}

.ex-tree .sub { padding-left: 31px; }
.ex-tree .group { margin-top: 8px; }
.ex-tree .selected { background: #333; }

.ex-tree svg {
  width: 16px;
  height: 16px;
}

.ex-files {
  flex: 1;
  display: flex;
  align-items: flex-end;
  padding-left: 3px;
  background: #202020;
}

.ex-scroll {
  flex: 1;
  display: flex;
  align-items: center;
  gap: 5px;
  height: 16px;
  padding: 0 4px;
  background: #191919;
}

.ex-scroll span {
  flex: 1;
  height: 16px;
  background: #4d4d4d;
}

.ex-scroll svg {
  width: 8px;
  height: 16px;
}

.ex-status {
  display: flex;
  align-items: center;
  height: 23px;
  padding: 0 4px 0 13px;
  background: #333;
  color: #ddd;
}

.ex-status span {
  padding-right: 9px;
  margin-right: 8px;
  line-height: 12px;
  border-right: 1px solid #ddd;
}

.ex-status button {
  display: flex;
  align-items: center;
  justify-content: center;
  width: 22px;
  height: 22px;
}

.ex-status .on {
  margin-left: auto;
  background: #777;
}

.ex-status svg {
  width: 14px;
  height: 14px;
}

/* Notepad */
.notepad {
  left: 206px;
  top: 122px;
  width: 752px;
  height: 516px;
  background: #fff;
  color: #111;
}

.np-title {
  display: flex;
  align-items: center;
  height: 30px;
  padding-left: 8px;
}

.np-title h1 {
  flex: 1;
  margin-left: 5px;
}

.np-title button {
  display: flex;
  align-items: center;
  justify-content: center;
  width: 46px;
  height: 30px;
}

.np-title button svg {
  width: 12px;
  height: 12px;
}

.np-menu {
  display: flex;
  gap: 13px;
  height: 20px;
  padding-left: 7px;
  border-bottom: 1px solid #eee;
}

.np-edit {
  flex: 1;
  min-height: 0;
  display: flex;
}

.np-edit textarea {
  flex: 1;
  min-width: 0;
  padding: 1px 0 0 4px;
  overflow: hidden;
  resize: none;
  font-family: "DejaVu Sans Mono", monospace;
  font-size: 13px;
  line-height: 18px;
  white-space: pre;
  tab-size: 8px;
  opacity: 0.9;
  will-change: opacity;
}

.np-vscroll,
.np-hscroll {
  display: flex;
  align-items: center;
  background: #f0f0f0;
}

.np-vscroll {
  flex-direction: column;
  width: 17px;
  padding: 4px 0 3px;
}

.np-vscroll span {
  width: 15px;
  height: 104px;
  margin: auto 0 4px;
  background: #cdcdcd;
}

.np-vscroll svg,
.np-hscroll svg {
  width: 10px;
  height: 10px;
}

.np-hscroll {
  height: 17px;
  padding: 0 20px 0 3px;
}

.np-hscroll span {
  width: 549px;
  height: 15px;
  margin: 0 auto 0 4px;
  background: #cdcdcd;
}

.np-status {
  display: grid;
  grid-template-columns: 1fr 140px 50px 120px 121px;
  height: 23px;
  background: #f0f0f0;
  border-top: 1px solid #ddd;
}

.np-status span {
  position: relative;
  padding: 4px 7px 2px;
  border-left: 1px solid #d7d7d7;
}

.np-status span:first-child { border-left: none; }
.np-status span:nth-child(2) { padding-left: 10px; }

.np-status i {
  position: absolute;
  right: 1px;
  bottom: 1px;
  width: 9px;
  height: 9px;
  background: radial-gradient(#aaa 1px, transparent 1px) 0 0 / 3px 3px;
  clip-path: polygon(100% 0, 100% 100%, 0 100%);
}

/* taskbar */
.taskbar {
  height: 40px;
  flex: none;
  display: flex;
  background: #1d1d1d;
}

.start-menu {
  width: 48px;
  display: flex;
  align-items: center;
  justify-content: center;
}

.start-menu svg {
  width: 16px;
  height: 16px;
}

.task-search {
  display: flex;
  align-items: center;
  gap: 10px;
  width: 321px;
  padding-left: 11px;
  background: #333;
  border: 1px solid #505050;
  font-size: 14px;
}

.task-search svg {
  width: 18px;
  height: 18px;
}

.task-search input { flex: 1; }
.task-search input::placeholder { color: #ccc; }

.apps {
  display: flex;
  gap: 1px;
  padding-left: 2px;
}

.apps button {
  display: flex;
  align-items: center;
  justify-content: center;
  width: 48px;
  background: linear-gradient(#8cc4ef, #8cc4ef) center bottom / 40px 2px no-repeat;
}

.apps .current {
  background-color: #464646;
  background-size: 48px 2px;
}

.apps svg {
  width: 24px;
  height: 24px;
}

.tray {
  display: flex;
  align-items: center;
  gap: 8px;
  margin-left: auto;
}

.tray > svg {
  width: 18px;
  height: 16px;
}

.tray .up {
  width: 14px;
  height: 14px;
}

.tray time {
  width: 60px;
  line-height: 18px;
  text-align: center;
}

.notes {
  position: relative;
  margin: 0 6px 0 4px;
  padding-right: 6px;
}

.notes svg {
  width: 18px;
  height: 18px;
}

.notes b {
  position: absolute;
  right: 0;
  bottom: -6px;
  width: 14px;
  height: 14px;
  border: 1px solid #999;
  border-radius: 7px;
  background: #222;
  font-size: 10px;
  line-height: 12px;
}

.show-desktop {
  width: 5px;
  height: 40px;
  border-left: 1px solid #555;
}
```
